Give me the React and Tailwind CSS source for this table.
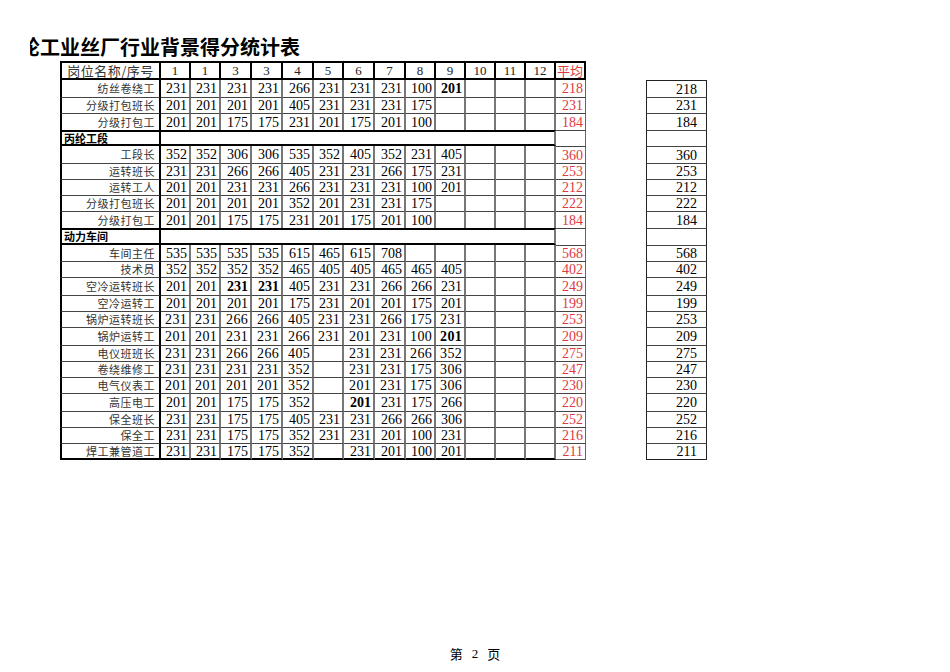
const W = [
  "w-[30px]", "w-[30px]", "w-[31px]", "w-[31px]", "w-[31px]", "w-[30px]", "w-[31px]",
  "w-[31px]", "w-[30px]", "w-[30px]", "w-[30px]", "w-[30px]", "w-[30px]",
];
const HEAD = ["1", "1", "3", "3", "4", "5", "6", "7", "8", "9", "10", "11", "12"];
const H = { 16: "h-[16px]", 17: "h-[17px]", 18: "h-[18px]" };

// '*' marks a bold value
const rows = [
  { name: "纺丝卷绕工", v: "231 231 231 231 266 231 231 231 100 201*", avg: "218", h: 17, top: "none" },
  { name: "分级打包班长", v: "201 201 201 201 405 231 231 231 175", avg: "231", h: 16 },
  { name: "分级打包工", v: "201 201 175 175 231 201 175 201 100", avg: "184", h: 17 },
  { section: "丙纶工段", h: 16 },
  { name: "工段长", v: "352 352 306 306 535 352 405 352 231 405", avg: "360", h: 17, top: "none" },
  { name: "运转班长", v: "231 231 266 266 405 231 231 266 175 231", avg: "253", h: 16 },
  { name: "运转工人", v: "201 201 231 231 266 231 231 231 100 201", avg: "212", h: 16 },
  { name: "分级打包班长", v: "201 201 201 201 352 201 231 231 175", avg: "222", h: 16 },
  { name: "分级打包工", v: "201 201 175 175 231 201 175 201 100", avg: "184", h: 17 },
  { section: "动力车间", h: 17 },
  { name: "车间主任", v: "535 535 535 535 615 465 615 708", avg: "568", h: 16, top: "none" },
  { name: "技术员", v: "352 352 352 352 465 405 405 465 465 405", avg: "402", h: 16 },
  { name: "空冷运转班长", v: "201 201 231* 231* 405 231 231 266 266 231", avg: "249", h: 18 },
  { name: "空冷运转工", v: "201 201 201 201 175 231 201 201 175 201", avg: "199", h: 16 },
  { name: "锅炉运转班长", v: "231 231 266 266 405 231 231 266 175 231", avg: "253", h: 16, sp: true },
  { name: "锅炉运转工", v: "201 201 231 231 266 231 201 231 100 201*", avg: "209", h: 18, sp: true },
  { name: "电仪班班长", v: "231 231 266 266 405 - 231 231 266 352", avg: "275", h: 16, sp: true },
  { name: "卷绕维修工", v: "231 231 231 231 352 - 231 231 175 306", avg: "247", h: 16, sp: true },
  { name: "电气仪表工", v: "201 201 201 201 352 - 201 231 175 306", avg: "230", h: 16, sp: true },
  { name: "高压电工", v: "201 201 175 175 352 - 201* 231 175 266", avg: "220", h: 18 },
  { name: "保全班长", v: "231 231 175 175 405 231 231 266 266 306", avg: "252", h: 16 },
  { name: "保全工", v: "231 231 175 175 352 231 231 201 100 231", avg: "216", h: 16 },
  { name: "焊工兼管道工", v: "231 231 175 175 352 - 231 201 100 201", avg: "211", h: 17, last: true },
];

const topCls = (t) =>
  t === "none" ? "" : t === "thick" ? "border-t-2 border-t-black" : "border-t border-t-[#444]";

function HeaderRow() {
  return (
    <div className="flex h-[19px]">
      <div className="w-[101px] flex items-center justify-center border-2 border-black text-[13px] tracking-[0.5px] font-['Noto_Sans_CJK_SC',sans-serif] text-[#333]">
        岗位名称/序号
      </div>
      {HEAD.map((n, i) => (
        <div
          key={i}
          className={`${W[i]} flex items-center justify-center border-y-2 border-r-2 border-black text-[13px] text-[#222]`}
        >
          {n}
        </div>
      ))}
      <div className="w-[30px] flex items-center justify-center border-y-2 border-r-2 border-black text-[13px] text-[#e0393e] font-['Noto_Sans_CJK_SC',sans-serif]">
        平均
      </div>
    </div>
  );
}

function SideCell({ row, first }) {
  return (
    <div
      className={`ml-[60px] w-[61px] flex items-center justify-end pr-[9px] text-[14px] border-x border-x-[#222] ${
        first ? "border-t border-t-[#222]" : "border-t border-t-[#444]"
      } ${row.last ? "border-b border-b-[#222]" : ""}`}
    >
      {row.avg}
    </div>
  );
}

function SectionRow({ row }) {
  return (
    <div className={`flex ${H[row.h]}`}>
      <div className="w-[101px] flex items-center pl-[2px] border-l-2 border-r-2 border-y-2 border-black text-[11px] font-bold font-['Noto_Sans_CJK_SC',sans-serif]">
        {row.section}
      </div>
      <div className="w-[395px] border-y-2 border-black border-r-2 border-r-[#777]" />
      <div className="w-[30px] border-t border-t-[#444] border-r border-r-[#666]" />
      <div className="ml-[60px] w-[61px] border-x border-x-[#222] border-t border-t-[#444]" />
    </div>
  );
}

function DataRow({ row, first }) {
  const vals = row.v.split(" ");
  const t = topCls(row.top || "thin");
  const bottom = row.last ? "border-b-2 border-b-black" : "";
  return (
    <div className={`flex ${H[row.h]}`}>
      <div
        className={`w-[101px] flex items-center justify-end pr-[4px] border-l-2 border-l-black border-r-2 border-r-black ${t} ${bottom} text-[11px] tracking-[0.5px] text-[#333] font-['Noto_Sans_CJK_SC',sans-serif]`}
      >
        {row.name}
      </div>
      {W.map((w, i) => {
        const raw = vals[i] && vals[i] !== "-" ? vals[i] : "";
        const bold = raw.endsWith("*");
        return (
          <div
            key={i}
            className={`${w} flex items-center justify-end pr-[2px] border-r-2 border-r-[#777] ${t} ${bottom} text-[14px] ${
              bold ? "font-bold" : ""
            } ${row.sp ? "tracking-[0.3px]" : ""}`}
          >
            {raw.replace("*", "")}
          </div>
        );
      })}
      <div
        className={`w-[30px] flex items-center justify-end pr-[2px] border-r border-r-[#666] ${
          first ? "" : "border-t border-t-[#444]"
        } ${row.last ? "border-b border-b-[#555]" : ""} text-[14px] text-[#e0393e]`}
      >
        {row.avg}
      </div>
      <SideCell row={row} first={first} />
    </div>
  );
}

export default function App() {
  return (
    <div className="w-[950px] h-[672px] bg-white relative overflow-hidden flex flex-col text-black font-['Liberation_Serif','Noto_Sans_CJK_SC',serif]">
      <div className="mt-[33px] h-[28px] ml-[30px] w-[320px] overflow-hidden whitespace-nowrap">
        <span className="block ml-[-10px] text-[20px] leading-[28px] font-bold font-['Noto_Sans_CJK_SC',sans-serif]">
          纶工业丝厂行业背景得分统计表
        </span>
      </div>

      <div className="flex flex-col pl-[60px]">
        <HeaderRow />
        {rows.map((r, i) =>
          r.section ? <SectionRow key={i} row={r} /> : <DataRow key={i} row={r} first={i === 0} />
        )}
      </div>

      <div className="mt-auto mb-[8px] h-[20px] flex items-center justify-center gap-[9px] text-[13px]">
        <span className="font-['Noto_Sans_CJK_SC',sans-serif]">第</span>
        <span>2</span>
        <span className="font-['Noto_Sans_CJK_SC',sans-serif]">页</span>
      </div>
    </div>
  );
}
